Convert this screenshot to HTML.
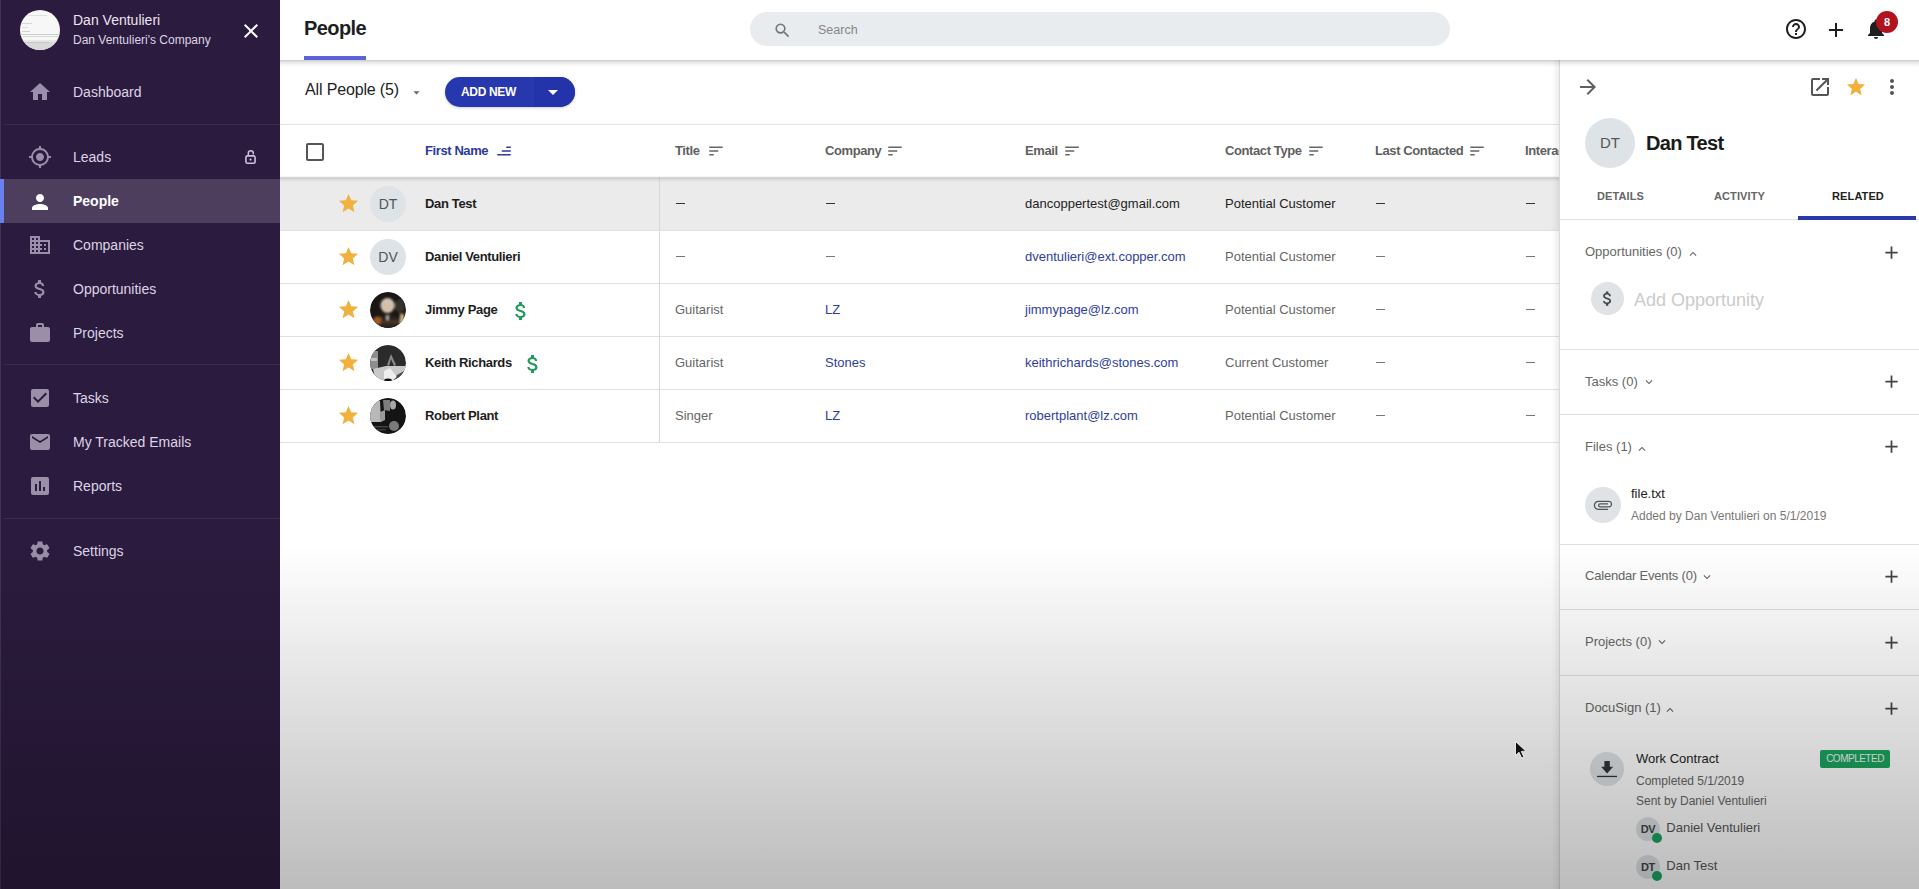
<!DOCTYPE html>
<html><head><meta charset="utf-8">
<style>
*{box-sizing:border-box;margin:0;padding:0}
html,body{width:1919px;height:889px;overflow:hidden;background:#fff;font-family:"Liberation Sans",sans-serif;}
.abs{position:absolute}
.t{position:absolute;white-space:nowrap}
svg{display:block}
#side{position:absolute;left:0;top:0;width:280px;height:889px;background:#2b1b3e;color:#ddd5e5}
.nav{position:absolute;left:0;width:280px;height:44px}
.nav .ic{position:absolute;left:28px;top:10px;width:24px;height:24px;fill:#9a8ea8}
.nav .tx{position:absolute;left:73px;top:0;line-height:44px;font-size:14px;color:#ddd5e5}
.div{position:absolute;left:3px;width:277px;height:1px;background:#3a2a4b}
#main{position:absolute;left:280px;top:0;width:1639px;height:889px;background:#fff}
#hdr{position:absolute;left:0;top:0;width:1639px;height:60px;background:#fff;z-index:3}
.th{position:absolute;top:140.5px;line-height:20px;font-size:13px;color:#5f5f5f;font-weight:bold;letter-spacing:-0.4px;white-space:nowrap}
.sorti{top:142px;fill:#666}
.nm{font-size:13px;font-weight:bold;color:#1d1d1d;line-height:20px;letter-spacing:-0.35px}
.cl{font-size:13px;color:#666;line-height:20px}
.lk{color:#2f3e9e}
.dk{color:#222}
.av{width:36px;height:36px;border-radius:50%;background:#dde3e6;color:#555;font-size:14px;line-height:36px;text-align:center}
.ph{width:36px;height:36px;border-radius:50%;overflow:hidden}
.ph-jp{background:radial-gradient(circle at 50% 32%,#d8cfc4 0,#b9ab9a 18%,#2a2420 34%,#1a1512 60%),#111}
.ph-kr{background:linear-gradient(160deg,#222 0,#3a3a3a 45%,#bdbdbd 62%,#e6e6e6 80%,#777 100%)}
.ph-rp{background:radial-gradient(circle at 55% 30%,#8a8a8a 0,#4a4a4a 30%,#1c1c1c 65%),#222}
#panel{position:absolute;left:1559px;top:60px;width:360px;height:829px;background:#fff;border-left:1px solid #dadada;z-index:2}
.sh{position:absolute;left:25px;font-size:13px;color:#666;line-height:20px;white-space:nowrap}
.plus{position:absolute;left:320px;width:24px;height:24px;fill:#444}
.sdiv{position:absolute;left:0;width:359px;height:1px;background:#e0e0e0}
#overlay{position:absolute;left:0;top:0;width:1919px;height:889px;z-index:100;pointer-events:none;
background:linear-gradient(to bottom,rgba(0,0,0,0) 0px,rgba(0,0,0,0) 545px,rgba(0,0,0,.262) 889px)}
</style></head><body>
<div id="side">
  <div class="abs" style="left:0;top:0;width:1px;height:889px;background:#413354"></div>
  <div class="abs" style="left:20px;top:10px;width:40px;height:40px;border-radius:50%;background:#f7f7f7;overflow:hidden">
    <div class="abs" style="left:8px;top:5px;width:19px;height:1px;background:#e0e0e0"></div>
    <div class="abs" style="left:2px;top:13px;width:10px;height:1px;background:#d6d6d6"></div>
    <div class="abs" style="left:2px;top:17px;width:6px;height:1px;background:#e0e0e0"></div>
    <div class="abs" style="left:2px;top:21px;width:8px;height:1px;background:#cfcfcf"></div>
    <div class="abs" style="left:0;top:23.5px;width:40px;height:1px;background:#cdcdcd"></div>
    <div class="abs" style="left:3px;top:26px;width:37px;height:1px;background:#d8d8d8"></div>
    <div class="abs" style="left:0;top:30px;width:40px;height:2px;background:#e6e6e6"></div>
    <div class="abs" style="left:0;top:32px;width:40px;height:10px;background:#d9d9d9"></div>
    <div class="abs" style="left:5px;top:32px;width:24px;height:1px;background:#c8c8c8"></div>
  </div>
  <div class="abs" style="left:73px;top:12px;font-size:14px;color:#ece6f0">Dan Ventulieri</div>
  <div class="abs" style="left:73px;top:33px;font-size:12px;color:#ddd5e5">Dan Ventulieri's Company</div>
  <svg class="abs" style="left:239px;top:18.6px;fill:#fff" width="24" height="24" viewBox="0 0 24 24"><path d="M19 6.41L17.59 5 12 10.59 6.41 5 5 6.41 10.59 12 5 17.59 6.41 19 12 13.41 17.59 19 19 17.59 13.41 12z"/></svg>

  <div class="nav" style="top:70px"><svg class="ic" viewBox="0 0 24 24"><path d="M10 20v-6h4v6h5v-8h3L12 3 2 12h3v8z"/></svg><div class="tx">Dashboard</div></div>
  <div class="div" style="top:124px"></div>
  <div class="nav" style="top:135px"><svg class="ic" viewBox="0 0 24 24"><path d="M12 8c-2.21 0-4 1.790-4 4s1.79 4 4 4 4-1.79 4-4-1.79-4-4-4zm8.94 3A8.994 8.994 0 0 0 13 3.06V1h-2v2.06A8.994 8.994 0 0 0 3.06 11H1v2h2.06A8.994 8.994 0 0 0 11 20.94V23h2v-2.06A8.994 8.994 0 0 0 20.94 13H23v-2h-2.06zM12 19c-3.870 0-7-3.13-7-7s3.13-7 7-7 7 3.13 7 7-3.13 7-7 7z"/></svg><div class="tx">Leads</div>
    <svg class="abs" style="left:240px;top:10px" width="20" height="24" viewBox="240 145 20 24"><rect x="245.9" y="155.9" width="9.2" height="7.4" rx="1.6" fill="none" stroke="#cdbfdb" stroke-width="1.6"/><path d="M248.3 155 V153.2 A2.5 2.5 0 0 1 253.3 153.2 V154.6" fill="none" stroke="#cdbfdb" stroke-width="1.5"/><circle cx="250.5" cy="159.6" r="1.1" fill="#cdbfdb"/></svg></div>
  <div class="nav" style="top:179px;background:#4e3e5e"><div class="abs" style="left:0;top:0;width:4px;height:44px;background:#6a80ee"></div><svg class="ic" style="fill:#fff;top:10.7px" viewBox="0 0 24 24"><path d="M12 12c2.21 0 4-1.79 4-4s-1.79-4-4-4-4 1.79-4 4 1.79 4 4 4zm0 2c-2.67 0-8 1.34-8 4v2h16v-2c0-2.66-5.33-4-8-4z"/></svg><div class="tx" style="color:#fff;font-weight:bold">People</div></div>
  <div class="nav" style="top:223px"><svg class="ic" viewBox="0 0 24 24"><path d="M12 7V3H2v18h20V7H12zM6 19H4v-2h2v2zm0-4H4v-2h2v2zm0-4H4V9h2v2zm0-4H4V5h2v2zm4 12H8v-2h2v2zm0-4H8v-2h2v2zm0-4H8V9h2v2zm0-4H8V5h2v2zm10 12h-8v-2h2v-2h-2v-2h2v-2h-2V9h8v10zm-2-8h-2v2h2v-2zm0 4h-2v2h2v-2z"/></svg><div class="tx">Companies</div></div>
  <div class="nav" style="top:267px"><svg class="ic" viewBox="0 0 24 24"><path d="M11.8 10.9c-2.27-.59-3-1.2-3-2.15 0-1.09 1.01-1.850 2.7-1.85 1.78 0 2.44.85 2.5 2.1h2.21c-.07-1.72-1.12-3.3-3.21-3.81V3h-3v2.16c-1.94.42-3.5 1.68-3.5 3.61 0 2.31 1.91 3.46 4.7 4.13 2.5.6 3 1.48 3 2.41 0 .69-.49 1.79-2.7 1.79-2.06 0-2.87-.92-2.98-2.1h-2.2c.12 2.19 1.76 3.42 3.68 3.83V21h3v-2.15c1.95-.37 3.5-1.5 3.5-3.55 0-2.84-2.43-3.81-4.7-4.4z"/></svg><div class="tx">Opportunities</div></div>
  <div class="nav" style="top:311px"><svg class="ic" viewBox="0 0 24 24"><path d="M20 6h-4V4c0-1.11-.89-2-2-2h-4c-1.11 0-2 .89-2 2v2H4c-1.11 0-1.99.89-1.99 2L2 19c0 1.11.89 2 2 2h16c1.11 0 2-.89 2-2V8c0-1.11-.89-2-2-2zm-6 0h-4V4h4v2z"/></svg><div class="tx">Projects</div></div>
  <div class="div" style="top:364px"></div>
  <div class="nav" style="top:376px"><svg class="ic" viewBox="0 0 24 24"><path d="M19 3H5c-1.11 0-2 .9-2 2v14c0 1.1.89 2 2 2h14c1.11 0 2-.9 2-2V5c0-1.1-.89-2-2-2zm-9 14l-5-5 1.41-1.41L10 14.17l7.59-7.59L19 8l-9 9z"/></svg><div class="tx">Tasks</div></div>
  <div class="nav" style="top:420px"><svg class="ic" viewBox="0 0 24 24"><path d="M20 4H4c-1.1 0-1.99.9-1.99 2L2 18c0 1.1.9 2 2 2h16c1.1 0 2-.9 2-2V6c0-1.1-.9-2-2-2zm0 4l-8 5-8-5V6l8 5 8-5v2z"/></svg><div class="tx">My Tracked Emails</div></div>
  <div class="nav" style="top:464px"><svg class="ic" viewBox="0 0 24 24"><path d="M19 3H5c-1.1 0-2 .9-2 2v14c0 1.1.9 2 2 2h14c1.1 0 2-.9 2-2V5c0-1.1-.9-2-2-2zM9 17H7v-7h2v7zm4 0h-2V7h2v10zm4 0h-2v-4h2v4z"/></svg><div class="tx">Reports</div></div>
  <div class="div" style="top:518px"></div>
  <div class="nav" style="top:529px"><svg class="ic" viewBox="0 0 24 24"><path d="M19.14 12.94c.04-.3.06-.61.06-.94 0-.32-.02-.64-.07-.94l2.030-1.58a.49.49 0 0 0 .12-.61l-1.92-3.32a.488.488 0 0 0-.59-.22l-2.39.96c-.5-.38-1.03-.7-1.62-.94l-.36-2.54a.484.484 0 0 0-.48-.41h-3.84c-.24 0-.43.17-.47.41l-.36 2.54c-.59.24-1.13.57-1.62.94l-2.39-.96c-.22-.08-.47 0-.59.22L2.74 8.87c-.12.21-.08.47.12.61l2.03 1.58c-.05.3-.09.63-.09.94s.02.64.07.94l-2.03 1.58a.49.49 0 0 0-.12.61l1.92 3.32c.12.22.37.29.59.22l2.39-.96c.5.38 1.03.7 1.62.94l.36 2.54c.05.24.24.41.48.41h3.84c.24 0 .44-.17.47-.41l.36-2.54c.59-.24 1.13-.56 1.62-.94l2.39.96c.22.08.47 0 .59-.22l1.92-3.32c.12-.22.07-.47-.12-.61l-2.01-1.58zM12 15.6c-1.98 0-3.6-1.62-3.6-3.6s1.62-3.6 3.6-3.6 3.6 1.62 3.6 3.6-1.62 3.6-3.6 3.6z"/></svg><div class="tx">Settings</div></div>
</div>

<div id="main">
  <div id="hdr">
    <div class="t" style="left:24px;top:18px;line-height:20px;font-size:20px;color:#1f1f1f;font-weight:bold;letter-spacing:-0.6px">People</div>
    <div class="abs" style="left:24px;top:56px;width:62px;height:4px;background:#5c62d8"></div>
    <div class="abs" style="left:470px;top:12px;width:700px;height:34px;border-radius:17px;background:#e8ecee"></div>
    <svg class="abs" style="left:492.7px;top:20.5px;fill:#757575" width="19" height="19" viewBox="0 0 24 24"><path d="M15.5 14h-.79l-.28-.27A6.471 6.471 0 0 0 16 9.5 6.5 6.5 0 1 0 9.5 16c1.61 0 3.09-.59 4.23-1.57l.27.28v.79l5 4.99L20.49 19l-4.99-5zm-6 0C7.010 14 5 11.99 5 9.5S7.01 5 9.5 5 14 7.01 14 9.5 11.99 14 9.5 14z"/></svg>
    <div class="t" style="left:538px;top:19.5px;line-height:20px;font-size:12.5px;color:#868686">Search</div>
    <svg class="abs" style="left:1504px;top:17px;fill:#1f1f1f" width="24" height="24" viewBox="0 0 24 24"><path d="M11 18h2v-2h-2v2zm1-16C6.48 2 2 6.48 2 12s4.48 10 10 10 10-4.48 10-10S17.52 2 12 2zm0 18c-4.41 0-8-3.59-8-8s3.59-8 8-8 8 3.59 8 8-3.59 8-8 8zm0-14c-2.21 0-4 1.79-4 4h2c0-1.1.9-2 2-2s2 .9 2 2c0 2-3 1.75-3 5h2c0-2.25 3-2.5 3-5 0-2.21-1.79-4-4-4z"/></svg>
    <svg class="abs" style="left:1544px;top:18px;fill:#1f1f1f" width="24" height="24" viewBox="0 0 24 24"><path d="M19 13h-6v6h-2v-6H5v-2h6V5h2v6h6v2z"/></svg>
    <svg class="abs" style="left:1584px;top:16.5px;fill:#1f1f1f" width="24" height="24" viewBox="0 0 24 24"><path d="M12 22c1.1 0 2-.9 2-2h-4c0 1.1.89 2 2 2zm6-6v-5c0-3.07-1.64-5.64-4.5-6.32V4c0-.83-.67-1.5-1.5-1.5s-1.5.67-1.5 1.5v.68C7.63 5.36 6 7.92 6 11v5l-2 2v1h16v-1l-2-2z"/></svg>
    <div class="abs" style="left:1596px;top:11px;width:22px;height:22px;border-radius:50%;background:#b0131e;color:#fff;font-size:11px;font-weight:bold;line-height:22px;text-align:center">8</div>
  </div>

  <div class="abs" style="left:0;top:60px;width:1639px;height:7px;background:linear-gradient(rgba(0,0,0,.2),rgba(0,0,0,.1) 30%,rgba(0,0,0,.03) 70%,rgba(0,0,0,0));z-index:4"></div>
  <!-- toolbar -->
  <div class="t" style="left:25px;top:79.5px;line-height:20px;font-size:16px;color:#222;letter-spacing:-0.15px">All People (5)</div>
  <svg class="abs" style="left:128.5px;top:85px;fill:#666" width="15" height="15" viewBox="0 0 24 24"><path d="M7 10l5 5 5-5z"/></svg>
  <div class="abs" style="left:165px;top:77px;width:130px;height:30px;border-radius:15px;background:#2737ae;box-shadow:0 1px 3px rgba(0,0,0,.2)"></div>
  <div class="abs" style="left:254px;top:77px;width:41px;height:30px;border-radius:0 15px 15px 0;background:#2333a9"></div>
  <div class="t" style="left:181px;top:81.5px;line-height:20px;font-size:12px;color:#fff;font-weight:bold;letter-spacing:-0.35px">ADD NEW</div>
  <svg class="abs" style="left:260.5px;top:80.2px;fill:#fff" width="24" height="24" viewBox="0 0 24 24"><path d="M7 10l5 5 5-5z"/></svg>
  <div class="abs" style="left:0;top:124px;width:1279px;height:1px;background:#e3e3e3"></div>

  <!-- table header -->
  <svg class="abs" style="left:23px;top:139.5px;fill:#555" width="24" height="24" viewBox="0 0 24 24"><path d="M19 5v14H5V5h14m0-2H5c-1.1 0-2 .9-2 2v14c0 1.1.9 2 2 2h14c1.1 0 2-.9 2-2V5c0-1.1-.9-2-2-2z"/></svg>
  <div class="th" style="left:145px;color:#2c3a9c;letter-spacing:-0.4px">First Name</div>
  <svg class="abs" style="left:215px;top:142px;fill:#2c3a9c;transform:rotate(180deg)" width="18" height="18" viewBox="0 0 24 24"><path d="M3 18h6v-2H3v2zM3 6v2h18V6H3zm0 7h12v-2H3v2z"/></svg>
  <div class="th" style="left:395px">Title</div>
  <svg class="abs sorti" style="left:426.5px" width="18" height="18" viewBox="0 0 24 24"><path d="M3 18h6v-2H3v2zM3 6v2h18V6H3zm0 7h12v-2H3v2z"/></svg>
  <div class="th" style="left:545px">Company</div>
  <svg class="abs sorti" style="left:605.5px" width="18" height="18" viewBox="0 0 24 24"><path d="M3 18h6v-2H3v2zM3 6v2h18V6H3zm0 7h12v-2H3v2z"/></svg>
  <div class="th" style="left:745px">Email</div>
  <svg class="abs sorti" style="left:782.5px" width="18" height="18" viewBox="0 0 24 24"><path d="M3 18h6v-2H3v2zM3 6v2h18V6H3zm0 7h12v-2H3v2z"/></svg>
  <div class="th" style="left:945px">Contact Type</div>
  <svg class="abs sorti" style="left:1026.5px" width="18" height="18" viewBox="0 0 24 24"><path d="M3 18h6v-2H3v2zM3 6v2h18V6H3zm0 7h12v-2H3v2z"/></svg>
  <div class="th" style="left:1095px">Last Contacted</div>
  <svg class="abs sorti" style="left:1188px" width="18" height="18" viewBox="0 0 24 24"><path d="M3 18h6v-2H3v2zM3 6v2h18V6H3zm0 7h12v-2H3v2z"/></svg>
  <div class="th" style="left:1245px">Interactions</div>
  <div class="abs" style="left:0;top:176px;width:1279px;height:6px;background:linear-gradient(rgba(0,0,0,.01),rgba(0,0,0,.12) 35%,rgba(0,0,0,.05) 65%,rgba(0,0,0,0));z-index:2"></div>

  <!-- rows -->
  <div class="abs" style="left:0;top:177px;width:1279px;height:53px;background:#eaebea"></div>
  <div class="abs" style="left:0;top:230px;width:1279px;height:1px;background:#e0e0e0"></div>
  <div class="abs" style="left:379px;top:177px;width:1px;height:53px;background:#d9d9d9"></div>
  <svg class="abs" style="left:56.5px;top:192.2px;fill:#f1b13f" width="23" height="23" viewBox="0 0 24 24"><path d="M12 17.27L18.18 21l-1.64-7.03L22 9.24l-7.19-.61L12 2 9.19 8.63 2 9.24l5.46 4.730L5.82 21z"/></svg>
  <div class="abs av" style="left:90px;top:186.0px">DT</div>
  <div class="t nm" style="left:145px;top:193.5px">Dan Test</div>
  <div class="abs" style="left:395.5px;top:203.0px;width:9px;height:1.4px;background:#333"></div>
  <div class="abs" style="left:545.5px;top:203.0px;width:9px;height:1.4px;background:#333"></div>
  <div class="t cl dk" style="left:745px;top:193.5px">dancoppertest@gmail.com</div>
  <div class="t cl dk" style="left:945px;top:193.5px">Potential Customer</div>
  <div class="abs" style="left:1095.5px;top:203.0px;width:9px;height:1.4px;background:#333"></div>
  <div class="abs" style="left:1245.5px;top:203.0px;width:9px;height:1.4px;background:#333"></div>
  <div class="abs" style="left:0;top:283px;width:1279px;height:1px;background:#e0e0e0"></div>
  <div class="abs" style="left:379px;top:230px;width:1px;height:53px;background:#d9d9d9"></div>
  <svg class="abs" style="left:56.5px;top:245.2px;fill:#f1b13f" width="23" height="23" viewBox="0 0 24 24"><path d="M12 17.27L18.18 21l-1.64-7.03L22 9.24l-7.19-.61L12 2 9.19 8.63 2 9.24l5.46 4.730L5.82 21z"/></svg>
  <div class="abs av" style="left:90px;top:239.0px">DV</div>
  <div class="t nm" style="left:145px;top:246.5px">Daniel Ventulieri</div>
  <div class="abs" style="left:395.5px;top:256.0px;width:9px;height:1.4px;background:#777"></div>
  <div class="abs" style="left:545.5px;top:256.0px;width:9px;height:1.4px;background:#777"></div>
  <div class="t cl lk" style="left:745px;top:246.5px">dventulieri@ext.copper.com</div>
  <div class="t cl" style="left:945px;top:246.5px">Potential Customer</div>
  <div class="abs" style="left:1095.5px;top:256.0px;width:9px;height:1.4px;background:#777"></div>
  <div class="abs" style="left:1245.5px;top:256.0px;width:9px;height:1.4px;background:#777"></div>
  <div class="abs" style="left:0;top:336px;width:1279px;height:1px;background:#e0e0e0"></div>
  <div class="abs" style="left:379px;top:283px;width:1px;height:53px;background:#d9d9d9"></div>
  <svg class="abs" style="left:56.5px;top:298.2px;fill:#f1b13f" width="23" height="23" viewBox="0 0 24 24"><path d="M12 17.27L18.18 21l-1.64-7.03L22 9.24l-7.19-.61L12 2 9.19 8.63 2 9.24l5.46 4.730L5.82 21z"/></svg>
  <svg class="abs ph" style="left:90px;top:292.0px" width="36" height="36" viewBox="0 0 36 36"><defs><clipPath id="cjp"><circle cx="18" cy="18" r="18"/></clipPath><filter id="bl1"><feGaussianBlur stdDeviation="0.8"/></filter></defs><g clip-path="url(#cjp)"><rect width="36" height="36" fill="#1b1613"/><g filter="url(#bl1)"><ellipse cx="30" cy="14" rx="5" ry="7" fill="#34302c"/><ellipse cx="17.5" cy="13.5" rx="7" ry="7.5" fill="#cfc6b8"/><ellipse cx="17.5" cy="15.5" rx="4.5" ry="5" fill="#d9bea6"/><ellipse cx="18" cy="31" rx="13" ry="8" fill="#2a2420"/><rect x="16.5" y="23" width="2" height="7" fill="#c8c8c8"/><ellipse cx="7.5" cy="28.5" rx="4.5" ry="4" fill="#9a5a20"/><rect x="11" y="28" width="20" height="4" fill="#4a3222"/><rect x="30" y="22" width="4" height="10" fill="#cfae84"/></g></g></svg>
  <div class="t nm" style="left:145px;top:299.5px">Jimmy Page</div>
  <svg class="abs" style="left:229px;top:298.6px;fill:#1d9a5c" width="24" height="24" viewBox="0 0 24 24"><path d="M11.8 10.9c-2.27-.59-3-1.2-3-2.15 0-1.09 1.01-1.85 2.7-1.85 1.78 0 2.44.85 2.5 2.1h2.21c-.07-1.72-1.12-3.3-3.21-3.81V3h-3v2.16c-1.94.42-3.5 1.68-3.5 3.61 0 2.31 1.91 3.46 4.7 4.13 2.5.6 3 1.48 3 2.41 0 .69-.49 1.79-2.7 1.79-2.06 0-2.87-.92-2.98-2.1h-2.2c.12 2.19 1.76 3.42 3.68 3.83V21h3v-2.15c1.95-.37 3.5-1.5 3.5-3.55 0-2.84-2.43-3.81-4.7-4.4z"/></svg>
  <div class="t cl" style="left:395px;top:299.5px">Guitarist</div>
  <div class="t cl lk" style="left:545px;top:299.5px">LZ</div>
  <div class="t cl lk" style="left:745px;top:299.5px">jimmypage@lz.com</div>
  <div class="t cl" style="left:945px;top:299.5px">Potential Customer</div>
  <div class="abs" style="left:1095.5px;top:309.0px;width:9px;height:1.4px;background:#777"></div>
  <div class="abs" style="left:1245.5px;top:309.0px;width:9px;height:1.4px;background:#777"></div>
  <div class="abs" style="left:0;top:389px;width:1279px;height:1px;background:#e0e0e0"></div>
  <div class="abs" style="left:379px;top:336px;width:1px;height:53px;background:#d9d9d9"></div>
  <svg class="abs" style="left:56.5px;top:351.2px;fill:#f1b13f" width="23" height="23" viewBox="0 0 24 24"><path d="M12 17.27L18.18 21l-1.64-7.03L22 9.24l-7.19-.61L12 2 9.19 8.63 2 9.24l5.46 4.730L5.82 21z"/></svg>
  <svg class="abs ph" style="left:90px;top:345.0px" width="36" height="36" viewBox="0 0 36 36"><defs><clipPath id="ckr"><circle cx="18" cy="18" r="18"/></clipPath><filter id="bl2"><feGaussianBlur stdDeviation="0.7"/></filter></defs><g clip-path="url(#ckr)"><rect width="36" height="36" fill="#2b2b2b"/><g filter="url(#bl2)"><rect x="0" y="6" width="8" height="18" fill="#8e8e8e"/><rect x="1" y="13" width="6" height="3" fill="#c4c4c4"/><path d="M17 20 L21 9 L26 20 L24 21 L21 14 L19 21Z" fill="#8a8a8a"/><path d="M3 24 L16 21 L36 21 L36 27 L26 31 L20 36 L6 36Z" fill="#c9c9c9"/><path d="M14 26 L20 23 L27 32 L22 36 L14 36Z" fill="#eeeeee"/><path d="M27 30 L36 25 L36 36 L26 36Z" fill="#4a4a4a"/><ellipse cx="18" cy="35.5" rx="4" ry="2" fill="#111"/></g></g></svg>
  <div class="t nm" style="left:145px;top:352.5px">Keith Richards</div>
  <svg class="abs" style="left:241px;top:351.6px;fill:#1d9a5c" width="24" height="24" viewBox="0 0 24 24"><path d="M11.8 10.9c-2.27-.59-3-1.2-3-2.15 0-1.09 1.01-1.85 2.7-1.85 1.78 0 2.44.85 2.5 2.1h2.21c-.07-1.72-1.12-3.3-3.21-3.81V3h-3v2.16c-1.94.42-3.5 1.68-3.5 3.61 0 2.31 1.91 3.46 4.7 4.13 2.5.6 3 1.48 3 2.41 0 .69-.49 1.79-2.7 1.79-2.06 0-2.87-.92-2.98-2.1h-2.2c.12 2.19 1.76 3.42 3.68 3.83V21h3v-2.15c1.95-.37 3.5-1.5 3.5-3.55 0-2.84-2.43-3.81-4.7-4.4z"/></svg>
  <div class="t cl" style="left:395px;top:352.5px">Guitarist</div>
  <div class="t cl lk" style="left:545px;top:352.5px">Stones</div>
  <div class="t cl lk" style="left:745px;top:352.5px">keithrichards@stones.com</div>
  <div class="t cl" style="left:945px;top:352.5px">Current Customer</div>
  <div class="abs" style="left:1095.5px;top:362.0px;width:9px;height:1.4px;background:#777"></div>
  <div class="abs" style="left:1245.5px;top:362.0px;width:9px;height:1.4px;background:#777"></div>
  <div class="abs" style="left:0;top:442px;width:1279px;height:1px;background:#e0e0e0"></div>
  <div class="abs" style="left:379px;top:389px;width:1px;height:53px;background:#d9d9d9"></div>
  <svg class="abs" style="left:56.5px;top:404.2px;fill:#f1b13f" width="23" height="23" viewBox="0 0 24 24"><path d="M12 17.27L18.18 21l-1.64-7.03L22 9.24l-7.19-.61L12 2 9.19 8.63 2 9.24l5.46 4.730L5.82 21z"/></svg>
  <svg class="abs ph" style="left:90px;top:398.0px" width="36" height="36" viewBox="0 0 36 36"><defs><clipPath id="crp"><circle cx="18" cy="18" r="18"/></clipPath><filter id="bl3"><feGaussianBlur stdDeviation="0.7"/></filter></defs><g clip-path="url(#crp)"><rect width="36" height="36" fill="#141414"/><g filter="url(#bl3)"><path d="M0 3 L10 3 L11 24 L0 24Z" fill="#b8b8b8"/><path d="M10 14 L15 12 L15 22 L11 24Z" fill="#9a9a9a"/><path d="M13 2 L20 2 L20 13 L14 12Z" fill="#7d7d7d"/><ellipse cx="23" cy="7" rx="3" ry="4.5" fill="#a8a8a8"/><ellipse cx="24" cy="28" rx="5" ry="5" fill="#7a7a7a"/><rect x="4" y="28" width="14" height="1.5" fill="#444"/><rect x="6" y="31" width="10" height="1.5" fill="#3a3a3a"/></g></g></svg>
  <div class="t nm" style="left:145px;top:405.5px">Robert Plant</div>
  <div class="t cl" style="left:395px;top:405.5px">Singer</div>
  <div class="t cl lk" style="left:545px;top:405.5px">LZ</div>
  <div class="t cl lk" style="left:745px;top:405.5px">robertplant@lz.com</div>
  <div class="t cl" style="left:945px;top:405.5px">Potential Customer</div>
  <div class="abs" style="left:1095.5px;top:415.0px;width:9px;height:1.4px;background:#777"></div>
  <div class="abs" style="left:1245.5px;top:415.0px;width:9px;height:1.4px;background:#777"></div>
</div>
<div id="panel">
  <svg class="abs" style="left:16px;top:14.7px;fill:#606060" width="24" height="24" viewBox="0 0 24 24"><path d="M12 4l-1.41 1.41L16.17 11H4v2h12.17l-5.58 5.59L12 20l8-8z"/></svg>
  <svg class="abs" style="left:248px;top:14.6px;fill:#555" width="24" height="24" viewBox="0 0 24 24"><path d="M19 19H5V5h7V3H5a2 2 0 0 0-2 2v14a2 2 0 0 0 2 2h14c1.1 0 2-.9 2-2v-7h-2v7zM14 3v2h3.59l-9.83 9.83 1.41 1.41L19 6.41V10h2V3h-7z"/></svg>
  <svg class="abs" style="left:285px;top:16.3px;fill:#f1b13f" width="22" height="22" viewBox="0 0 24 24"><path d="M12 17.27L18.18 21l-1.64-7.03L22 9.24l-7.19-.61L12 2 9.19 8.63 2 9.24l5.46 4.73L5.82 21z"/></svg>
  <svg class="abs" style="left:320px;top:14.5px;fill:#555" width="24" height="24" viewBox="0 0 24 24"><path d="M12 8c1.1 0 2-.9 2-2s-.9-2-2-2-2 .9-2 2 .9 2 2 2zm0 2c-1.1 0-2 .9-2 2s.9 2 2 2 2-.9 2-2-.9-2-2-2zm0 6c-1.1 0-2 .9-2 2s.9 2 2 2 2-.9 2-2-.9-2-2-2z"/></svg>

  <div class="abs" style="left:25px;top:58px;width:50px;height:50px;border-radius:50%;background:#dde3e6;color:#555;font-size:15px;line-height:50px;text-align:center">DT</div>
  <div class="t" style="left:86px;top:73px;line-height:20px;font-size:20px;font-weight:bold;color:#1a1a1a;letter-spacing:-0.7px">Dan Test</div>

  <div class="t" style="left:1px;top:126px;width:119px;text-align:center;line-height:20px;font-size:11px;font-weight:bold;color:#666;letter-spacing:0.1px">DETAILS</div>
  <div class="t" style="left:120px;top:126px;width:119px;text-align:center;line-height:20px;font-size:11px;font-weight:bold;color:#666;letter-spacing:0.1px">ACTIVITY</div>
  <div class="t" style="left:239px;top:126px;width:118px;text-align:center;line-height:20px;font-size:11px;font-weight:bold;color:#222;letter-spacing:0.1px">RELATED</div>
  <div class="sdiv" style="top:159px"></div>
  <div class="abs" style="left:238px;top:156px;width:118px;height:4px;background:#2b39a6"></div>

  <div class="sh" style="top:181.7px">Opportunities (0)</div>
  <svg class="abs" style="left:126px;top:186.5px;fill:#666" width="14" height="14" viewBox="0 0 24 24"><path d="M12 8l-6 6 1.41 1.41L12 10.83l4.59 4.58L18 14z"/></svg>
  <div class="abs" style="left:31px;top:222px;width:33px;height:33px;border-radius:50%;background:#dfe3e6"></div>
  <svg class="abs" style="left:38px;top:229px;fill:#444" width="19" height="19" viewBox="0 0 24 24"><path d="M11.8 10.9c-2.27-.59-3-1.2-3-2.15 0-1.09 1.01-1.85 2.7-1.85 1.78 0 2.44.85 2.5 2.1h2.21c-.07-1.72-1.12-3.3-3.21-3.81V3h-3v2.16c-1.94.42-3.5 1.68-3.5 3.61 0 2.31 1.91 3.46 4.7 4.13 2.5.6 3 1.48 3 2.41 0 .69-.49 1.79-2.7 1.79-2.06 0-2.87-.92-2.98-2.1h-2.2c.12 2.19 1.76 3.42 3.68 3.83V21h3v-2.15c1.95-.37 3.5-1.5 3.5-3.55 0-2.84-2.43-3.81-4.7-4.4z"/></svg>
  <div class="t" style="left:74px;top:228px;line-height:24px;font-size:18px;color:#cbcbcb">Add Opportunity</div>
  <div class="sdiv" style="top:289px"></div>

  <div class="sh" style="top:311.5px">Tasks (0)</div>
  <svg class="abs" style="left:82px;top:314.5px;fill:#666" width="14" height="14" viewBox="0 0 24 24"><path d="M16.59 8.59L12 13.170 7.41 8.59 6 10l6 6 6-6z"/></svg>
  <div class="sdiv" style="top:354px"></div>

  <div class="sh" style="top:376.7px">Files (1)</div>
  <svg class="abs" style="left:75px;top:381.5px;fill:#666" width="14" height="14" viewBox="0 0 24 24"><path d="M12 8l-6 6 1.41 1.41L12 10.83l4.59 4.58L18 14z"/></svg>
  <div class="abs" style="left:25px;top:426.5px;width:36px;height:36px;border-radius:50%;background:#dfe3e6"></div>
  <svg class="abs" style="left:33.3px;top:435.2px;fill:#555;transform:rotate(90deg)" width="20" height="20" viewBox="0 0 24 24"><path d="M16.5 6v11.5c0 2.21-1.79 4-4 4s-4-1.79-4-4V5a2.5 2.5 0 0 1 5 0v10.5c0 .55-.45 1-1 1s-1-.45-1-1V6H10v9.5a2.5 2.5 0 0 0 5 0V5c0-2.21-1.79-4-4-4S7 2.79 7 5v12.5c0 3.04 2.46 5.5 5.5 5.5s5.5-2.46 5.5-5.5V6h-1.5z"/></svg>
  <div class="t" style="left:71px;top:424px;line-height:20px;font-size:13px;color:#222">file.txt</div>
  <div class="t" style="left:71px;top:446px;line-height:20px;font-size:12px;color:#777">Added by Dan Ventulieri on 5/1/2019</div>
  <div class="sdiv" style="top:484px"></div>

  <div class="sh" style="top:506.3px;letter-spacing:-0.2px">Calendar Events (0)</div>
  <svg class="abs" style="left:140px;top:509.5px;fill:#666" width="14" height="14" viewBox="0 0 24 24"><path d="M16.59 8.59L12 13.17 7.41 8.59 6 10l6 6 6-6z"/></svg>
  <div class="sdiv" style="top:549px"></div>

  <div class="sh" style="top:571.5px">Projects (0)</div>
  <svg class="abs" style="left:95px;top:574.5px;fill:#666" width="14" height="14" viewBox="0 0 24 24"><path d="M16.59 8.59L12 13.17 7.41 8.59 6 10l6 6 6-6z"/></svg>
  <div class="sdiv" style="top:615px"></div>

  <div class="sh" style="top:638px">DocuSign (1)</div>
  <svg class="abs" style="left:103px;top:642.5px;fill:#666" width="14" height="14" viewBox="0 0 24 24"><path d="M12 8l-6 6 1.41 1.41L12 10.83l4.59 4.58L18 14z"/></svg>
  <div class="abs" style="left:30px;top:692px;width:34px;height:34px;border-radius:50%;background:#dfe3e6"></div>
  <svg class="abs" style="left:0;top:0;fill:#333" width="100" height="730" viewBox="0 0 100 730"><path d="M44.4 701h5.4v5.8h3.3l-6 6.8-6-6.8h3.3z"/><rect x="37" y="715.8" width="20" height="1.3"/></svg>
  <div class="t" style="left:76px;top:689px;line-height:20px;font-size:13px;color:#222">Work Contract</div>
  <div class="abs" style="left:260px;top:690px;width:70px;height:18px;background:#1ba45f;border-radius:2px;color:#eaf6ef;font-size:10px;line-height:18px;text-align:center;letter-spacing:-0.5px">COMPLETED</div>
  <div class="t" style="left:76px;top:710.7px;line-height:20px;font-size:12px;color:#666">Completed 5/1/2019</div>
  <div class="t" style="left:76px;top:730.8px;line-height:20px;font-size:12px;color:#666">Sent by Daniel Ventulieri</div>
  <div class="abs" style="left:76px;top:756.6px;width:24px;height:24px;border-radius:50%;background:#dfe3e6;color:#444;font-size:11px;font-weight:bold;line-height:24px;text-align:center;letter-spacing:-0.3px">DV</div>
  <div class="abs" style="left:91.8px;top:773px;width:10px;height:10px;border-radius:50%;background:#1ba45f"></div>
  <div class="t" style="left:106.3px;top:758.1px;line-height:20px;font-size:13px;color:#555">Daniel Ventulieri</div>
  <div class="abs" style="left:76px;top:794.6px;width:24px;height:24px;border-radius:50%;background:#dfe3e6;color:#444;font-size:11px;font-weight:bold;line-height:24px;text-align:center;letter-spacing:-0.3px">DT</div>
  <div class="abs" style="left:91.8px;top:811px;width:10px;height:10px;border-radius:50%;background:#1ba45f"></div>
  <div class="t" style="left:106.3px;top:796.2px;line-height:20px;font-size:13px;color:#555">Dan Test</div>
  <svg class="abs" style="left:320.5px;top:181.8px;fill:#444" width="21" height="21" viewBox="0 0 24 24"><path d="M19 13h-6v6h-2v-6H5v-2h6V5h2v6h6v2z"/></svg>
  <svg class="abs" style="left:320.5px;top:311.2px;fill:#444" width="21" height="21" viewBox="0 0 24 24"><path d="M19 13h-6v6h-2v-6H5v-2h6V5h2v6h6v2z"/></svg>
  <svg class="abs" style="left:320.5px;top:376.4px;fill:#444" width="21" height="21" viewBox="0 0 24 24"><path d="M19 13h-6v6h-2v-6H5v-2h6V5h2v6h6v2z"/></svg>
  <svg class="abs" style="left:320.5px;top:506.1px;fill:#444" width="21" height="21" viewBox="0 0 24 24"><path d="M19 13h-6v6h-2v-6H5v-2h6V5h2v6h6v2z"/></svg>
  <svg class="abs" style="left:320.5px;top:571.8px;fill:#444" width="21" height="21" viewBox="0 0 24 24"><path d="M19 13h-6v6h-2v-6H5v-2h6V5h2v6h6v2z"/></svg>
  <svg class="abs" style="left:320.5px;top:638.0px;fill:#444" width="21" height="21" viewBox="0 0 24 24"><path d="M19 13h-6v6h-2v-6H5v-2h6V5h2v6h6v2z"/></svg>
</div>
<div class="abs" style="left:1551px;top:60px;width:8px;height:829px;background:linear-gradient(to right,rgba(0,0,0,0),rgba(0,0,0,.02) 40%,rgba(0,0,0,.065));z-index:2"></div>
<svg class="abs" style="left:1513px;top:739px;z-index:101" width="16" height="22" viewBox="0 0 16 22"><path d="M2.5 2.5 L2.5 16.5 L6 13.2 L8.6 19 L10.8 18 L8.3 12.4 L13 12.2 Z" fill="#111" stroke="#fff" stroke-width="0.8" stroke-linejoin="round"/></svg>
<div id="overlay"></div>
</body></html>
